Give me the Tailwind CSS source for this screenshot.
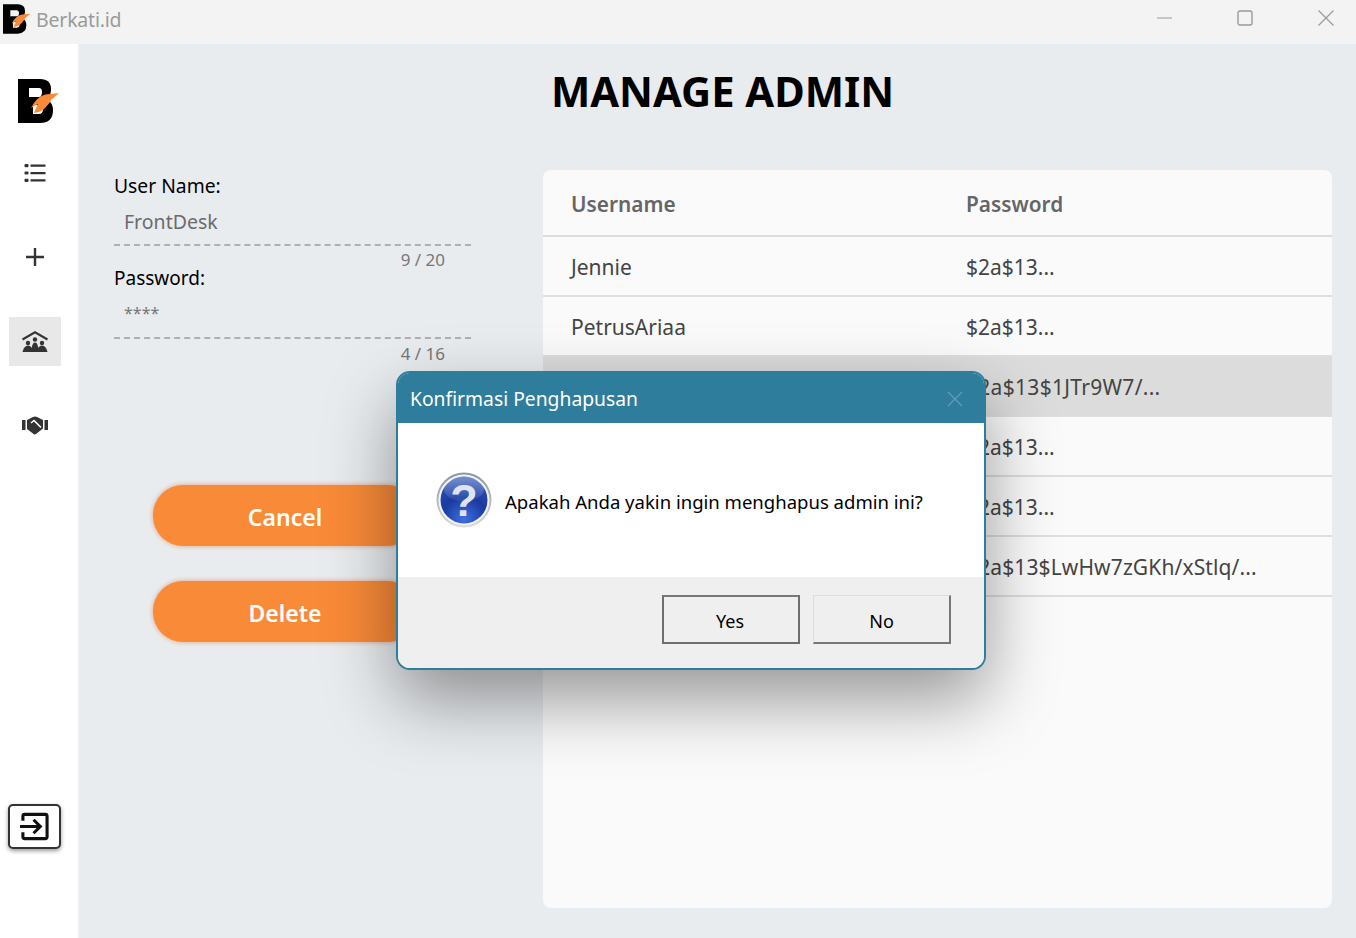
<!DOCTYPE html>
<html lang="id">
<head>
    <meta charset="UTF-8">
    <title>Berkati.id</title>
    <script src="https://cdn.jsdelivr.net/npm/@tailwindcss/browser@4"></script>
</head>
<body class="font-['Noto_Sans','Open_Sans',sans-serif]">
<div class="relative w-[1356px] h-[938px] overflow-hidden bg-[#e9ecef] flex flex-col">

    <!-- title bar -->
    <header class="h-11 shrink-0 bg-[#f3f3f3] flex items-center">
        <svg class="ml-[3px] mb-[7px] w-[28px] h-[30px]" viewBox="0 0 42 44">
            <path fill="#000" fill-rule="evenodd" d="M0 0H22Q33 0 33 10Q33 17 29 20Q35 24 35 31Q35 44 22 44H0ZM11 9V18H21Q24 18 24 13Q24 9 21 9ZM15 26V35H21Q25 35 25 30Q25 26 21 26Z"/>
            <path fill="#f98a38" d="M41 14L32 15Q22 15 16 24L13 29L20 25Q18 29 16 34Q24 33 28 28Q32 24 33 21Z"/>
        </svg>
        <span class="ml-[5px] mb-[5px] text-[19.5px] text-[#9a9a9a] tracking-[-0.2px]">Berkati.id</span>
        <div class="ml-auto flex items-center mb-[9px]">
            <svg class="w-4 h-4 mr-[64px]" viewBox="0 0 16 16"><path d="M0 8H15" stroke="#9a9a9a" stroke-width="1"/></svg>
            <svg class="w-4 h-4 mr-[65px]" viewBox="0 0 16 16"><rect x="1" y="1" width="14" height="14" rx="2" fill="none" stroke="#9a9a9a" stroke-width="1.4"/></svg>
            <svg class="w-4 h-4 mr-[22px]" viewBox="0 0 16 16"><path d="M0.5 0.5L15.5 15.5M15.5 0.5L0.5 15.5" stroke="#9a9a9a" stroke-width="1.2"/></svg>
        </div>
    </header>

    <div class="flex flex-1 min-h-0">
        <!-- sidebar -->
        <aside class="w-[79px] shrink-0 bg-white flex flex-col items-center pr-[8px] border-r border-[#f0f0f0]">
            <svg class="mt-[35px] ml-[8px] w-[42px] h-[44px]" viewBox="0 0 42 44">
                <path fill="#000" fill-rule="evenodd" d="M0 0H22Q33 0 33 10Q33 17 29 20Q35 24 35 31Q35 44 22 44H0ZM11 9V18H21Q24 18 24 13Q24 9 21 9ZM15 26V35H21Q25 35 25 30Q25 26 21 26Z"/>
                <path fill="#f98a38" d="M41 14L32 15Q22 15 16 24L13 29L20 25Q18 29 16 34Q24 33 28 28Q32 24 33 21Z"/>
            </svg>
            <svg class="mt-[38px] w-6 h-6" viewBox="0 0 24 24" fill="#333"><rect x="1.5" y="3" width="4" height="3.2" rx="1"/><rect x="1.5" y="10.4" width="4" height="3.2" rx="1"/><rect x="1.5" y="17.8" width="4" height="3.2" rx="1"/><path d="M7.5 3.5H22.5V5.8H7.5ZM7.5 10.9H22.5V13.2H7.5ZM7.5 18.3H22.5V20.6H7.5Z"/></svg>
            <svg class="mt-[60px] w-6 h-6" viewBox="0 0 24 24" fill="#333"><path d="M10.8 3H13.2V10.8H21V13.2H13.2V21H10.8V13.2H3V10.8H10.8Z"/></svg>
            <div class="mt-[48px] w-[52px] h-[49px] bg-[#e8e8e8] flex items-center justify-center">
                <svg class="w-[28px] h-[24px]" viewBox="0 0 28 24" fill="#333">
                    <path d="M14 1L27 8.5L26 10.5L14 3.5L2 10.5L1 8.5Z"/>
                    <circle cx="14" cy="9.5" r="2.2"/><path d="M10.5 22Q10.5 12.5 14 12.5Q17.5 12.5 17.5 22Z"/>
                    <circle cx="7" cy="13" r="2.2"/><path d="M1.5 22Q3 15.5 7 15.5Q11 15.5 12.5 22Z"/>
                    <circle cx="21" cy="13" r="2.2"/><path d="M15.5 22Q17 15.5 21 15.5Q25 15.5 26.5 22Z"/>
                </svg>
            </div>
            <svg class="mt-[49px] w-[28px] h-[20px]" viewBox="0 0 28 20" fill="#333">
                <path d="M1 5H4.5V15H1ZM23.5 5H27V15H23.5Z"/>
                <path d="M6 5L12 2Q14 1 16 2L22 5V13.5L15 19Q13.5 20 12 18.5L6 14Z"/>
                <path d="M10 8L13 5.5L20 12.5" fill="none" stroke="#fff" stroke-width="1.6"/>
            </svg>
            <button class="mt-auto mb-[89px] ml-[-1px] w-[53px] h-[45px] bg-white border-2 border-[#333] rounded-[5px] shadow-[0_2px_4px_rgba(0,0,0,0.4)] flex items-center justify-center">
                <svg class="w-[29px] h-[29px]" viewBox="0 0 30 30" fill="none" stroke="#111" stroke-width="3.2">
                    <path d="M3 9V4.5Q3 2.5 5 2.5H26Q28 2.5 28 4.5V25.5Q28 27.5 26 27.5H5Q3 27.5 3 25.5V21"/>
                    <path d="M0 15H20M14 8L21 15L14 22"/>
                </svg>
            </button>
        </aside>

        <!-- main -->
        <main class="flex-1 min-w-0 flex flex-col">
            <h1 class="mt-[17px] h-[60px] leading-[60px] text-center text-[41.7px] font-bold text-black ml-[10px]">MANAGE ADMIN</h1>
            <div class="flex mt-[49px]">
                <!-- form -->
                <section class="w-[464px] shrink-0 pl-[35px]">
                    <label class="block h-[30px] leading-[30px] mt-[1px] text-[19.3px] text-black">User Name:</label>
                    <div class="mt-[6px] w-[347px] h-[30px] pl-[10px] leading-[30px] text-[19.5px] text-[#6b6b6b] border-b-2 border-dashed border-[#b0b0b0] box-content pb-[7px]">FrontDesk</div>
                    <div class="w-[331px] pt-[2px] text-right text-[17px] leading-[24px] text-[#777]">9 / 20</div>
                    <label class="block h-[30px] leading-[30px] mt-[-9px] text-[19px] text-black">Password:</label>
                    <div class="mt-[8px] w-[347px] h-[30px] pl-[10px] leading-[24px] text-[16px] text-[#777] border-b-2 border-dashed border-[#b0b0b0] box-content pb-[6px]">****</div>
                    <div class="w-[331px] pt-[3px] text-right text-[17px] leading-[24px] text-[#777]">4 / 16</div>
                    <button class="mt-[119px] ml-[39px] block w-[264px] h-[61px] pt-[4px] rounded-[30px] bg-[#f98a38] text-white text-[23px] font-semibold shadow-[0_0_5px_rgba(220,110,60,0.6)]">Cancel</button>
                    <button class="mt-[35px] ml-[39px] block w-[264px] h-[61px] pt-[4px] rounded-[30px] bg-[#f98a38] text-white text-[23px] font-semibold shadow-[0_0_5px_rgba(220,110,60,0.6)]">Delete</button>
                </section>

                <!-- table -->
                <section class="w-[789px] h-[738px] bg-[#fafafa] rounded-[8px] overflow-hidden">
                    <div class="grid grid-cols-[423px_1fr] h-[67px] pt-[4px] items-center border-b-2 border-[#dcdcdc] text-[20.8px] font-semibold text-[#666]">
                        <span class="pl-[28px]">Username</span><span>Password</span>
                    </div>
                    <div class="grid grid-cols-[423px_1fr] h-[60px] pt-[4px] items-center border-b-2 border-[#dedede] text-[21px] text-[#444]">
                        <span class="pl-[28px]">Jennie</span><span>$2a$13...</span>
                    </div>
                    <div class="grid grid-cols-[423px_1fr] h-[60px] pt-[4px] items-center border-b-2 border-[#dedede] text-[21px] text-[#444]">
                        <span class="pl-[28px]">PetrusAriaa</span><span>$2a$13...</span>
                    </div>
                    <div class="grid grid-cols-[423px_1fr] h-[60px] pt-[4px] items-center border-b-2 border-[#dedede] text-[21px] text-[#444] bg-[#dcdcdc]">
                        <span></span><span class="tracking-[0.3px]">$2a$13$1JTr9W7/...</span>
                    </div>
                    <div class="grid grid-cols-[423px_1fr] h-[60px] pt-[4px] items-center border-b-2 border-[#dedede] text-[21px] text-[#444]">
                        <span></span><span>$2a$13...</span>
                    </div>
                    <div class="grid grid-cols-[423px_1fr] h-[60px] pt-[4px] items-center border-b-2 border-[#dedede] text-[21px] text-[#444]">
                        <span></span><span>$2a$13...</span>
                    </div>
                    <div class="grid grid-cols-[423px_1fr] h-[60px] pt-[4px] items-center border-b-2 border-[#dedede] text-[21px] text-[#444]">
                        <span></span><span class="tracking-[0.12px]">$2a$13$LwHw7zGKh/xStlq/...</span>
                    </div>
                </section>
            </div>
        </main>
    </div>

    <!-- confirm dialog -->
    <div class="absolute left-[396px] top-[371px] w-[590px] h-[299px] rounded-[14px] border-2 border-[#2e7d9c] bg-white overflow-hidden flex flex-col shadow-[0_30px_70px_rgba(0,0,0,0.4)]">
        <div class="h-[50px] shrink-0 bg-[#2e7d9c] flex items-center pl-[12px] pr-[21px] pt-[2px]">
            <span class="text-[19.3px] text-white">Konfirmasi Penghapusan</span>
            <svg class="ml-auto w-[16px] h-[16px]" viewBox="0 0 16 16"><path d="M1 1L15 15M15 1L1 15" stroke="#5f9db6" stroke-width="1.3"/></svg>
        </div>
        <div class="h-[154px] shrink-0 flex items-center pl-[38px] pt-[4px]">
            <svg class="w-[56px] h-[56px] shrink-0 mt-[-4px]" viewBox="0 0 56 56">
                <defs>
                    <radialGradient id="orb" cx="0.5" cy="0.9" r="0.85"><stop offset="0" stop-color="#3f6fe0"/><stop offset="0.55" stop-color="#1a3a9f"/><stop offset="1" stop-color="#2b50b5"/></radialGradient>
                    <linearGradient id="ring" x1="0" y1="0" x2="0" y2="1"><stop offset="0" stop-color="#8a97a8"/><stop offset="1" stop-color="#dcdcdc"/></linearGradient>
                    <linearGradient id="gloss" x1="0" y1="0" x2="0" y2="1"><stop offset="0" stop-color="#fff" stop-opacity="0.35"/><stop offset="1" stop-color="#fff" stop-opacity="0.05"/></linearGradient>
                </defs>
                <circle cx="28" cy="28" r="27.5" fill="url(#ring)"/>
                <circle cx="28" cy="28" r="25.5" fill="#f4f4f4"/>
                <circle cx="28" cy="28" r="23.5" fill="url(#orb)"/>
                <ellipse cx="28" cy="17" rx="20" ry="12.5" fill="url(#gloss)"/>
                <text x="28" y="44" text-anchor="middle" font-family="Liberation Sans" font-weight="700" font-size="45" fill="#dfe3ee">?</text>
            </svg>
            <span class="ml-[13px] text-[18.55px] text-black">Apakah Anda yakin ingin menghapus admin ini?</span>
        </div>
        <div class="flex-1 bg-[#efefef] flex items-start justify-end pt-[18px] pr-[33px] gap-[13px]">
            <button class="w-[138px] h-[49px] pt-[4px] pr-[2px] bg-[#efefef] border-2 border-[#6e6e6e] border-t-[#777] text-[18px] text-black">Yes</button>
            <button class="w-[138px] h-[49px] pt-[4px] bg-[#efefef] border border-t-[#ddd] border-l-[#ddd] border-r-2 border-b-2 border-r-[#777] border-b-[#777] text-[18px] text-black">No</button>
        </div>
    </div>
</div>
</body>
</html>
